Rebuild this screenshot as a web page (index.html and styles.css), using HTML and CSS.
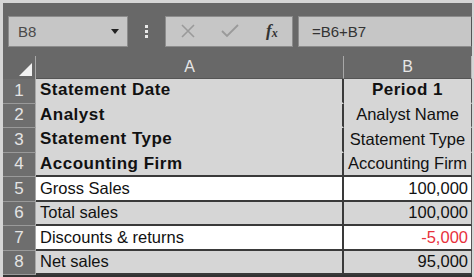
FILE: index.html
```html
<!DOCTYPE html>
<html lang="en">
<head>
    <meta charset="UTF-8">
    <meta name="viewport" content="width=device-width, initial-scale=1.0">
    <title>Sheet - B8</title>
    <link rel="stylesheet" href="styles.css">
</head>
<body>
    <div class="window">
        <div class="toolbar">
            <div class="name-box">
                <span>B8</span>
                <span class="caret"></span>
            </div>
            <div class="grip">
                <span></span><span></span><span></span>
            </div>
            <div class="tool-box">
                <svg class="tool-icon" width="14" height="14" viewBox="0 0 14 14">
                    <path d="M1 1 L13 13 M13 1 L1 13" stroke="#9a9a9a" stroke-width="1.6" fill="none"/>
                </svg>
                <svg class="tool-icon" width="18" height="14" viewBox="0 0 18 14">
                    <path d="M1 7 L6 12 L17 1" stroke="#9a9a9a" stroke-width="1.8" fill="none"/>
                </svg>
                <span class="fx">f<sub>x</sub></span>
            </div>
            <div class="formula-box">=B6+B7</div>
        </div>

        <div class="sheet">
            <div class="corner"><span class="select-all"></span></div>
            <div class="col-head">A</div>
            <div class="col-head last">B</div>

            <div class="row-num">1</div>
            <div class="cell bold plain">Statement Date</div>
            <div class="cell bold plain center colb">Period 1</div>

            <div class="row-num">2</div>
            <div class="cell bold plain">Analyst</div>
            <div class="cell plain center colb">Analyst Name</div>

            <div class="row-num">3</div>
            <div class="cell bold plain">Statement Type</div>
            <div class="cell plain center colb">Statement Type</div>

            <div class="row-num">4</div>
            <div class="cell bold">Accounting Firm</div>
            <div class="cell center colb">Accounting Firm</div>

            <div class="row-num">5</div>
            <div class="cell white">Gross Sales</div>
            <div class="cell white num colb">100,000</div>

            <div class="row-num">6</div>
            <div class="cell">Total sales</div>
            <div class="cell num colb">100,000</div>

            <div class="row-num">7</div>
            <div class="cell white">Discounts &amp; returns</div>
            <div class="cell white num negative colb">-5,000</div>

            <div class="row-num">8</div>
            <div class="cell">Net sales</div>
            <div class="cell num colb">95,000</div>
        </div>
    </div>
</body>
</html>
```

FILE: styles.css
```css
body {
    margin: 0;
    padding: 3px 2px 0 3px;
    background: #d6d6d6;
    font-family: "Liberation Sans", Arial, sans-serif;
    height: 277px;
    box-sizing: border-box;
    overflow: hidden;
}

.window {
    background: #686868;
}

.toolbar {
    display: flex;
    align-items: center;
    height: 53px;
    padding: 12px 0 9px 5px;
    box-sizing: border-box;
}

.name-box {
    width: 120px;
    height: 31px;
    box-sizing: border-box;
    background: #c6c6c6;
    border: 1px solid #8c8c8c;
    display: flex;
    align-items: center;
    justify-content: space-between;
    padding: 0 8px 0 9px;
    font-size: 15px;
    color: #4a4a4a;
}

.caret {
    width: 0;
    height: 0;
    border-left: 4px solid transparent;
    border-right: 4px solid transparent;
    border-top: 5px solid #222;
}

.grip {
    width: 37px;
    display: flex;
    flex-direction: column;
    align-items: center;
    gap: 2px;
}

.grip span {
    width: 3px;
    height: 3px;
    background: #e8e8e8;
}

.tool-box {
    width: 128px;
    height: 31px;
    box-sizing: border-box;
    background: #c6c6c6;
    border: 1px solid #8c8c8c;
    display: flex;
    align-items: center;
    padding-left: 15px;
}

.tool-icon {
    margin-right: 26px;
}

.fx {
    font-family: "Liberation Serif", "Times New Roman", serif;
    font-style: italic;
    font-weight: bold;
    font-size: 17px;
    color: #333;
    margin-left: 1px;
}

.fx sub {
    font-size: 12px;
    vertical-align: -1px;
}

.formula-box {
    flex: 1;
    height: 31px;
    box-sizing: border-box;
    margin-left: 5px;
    background: #c6c6c6;
    border: 1px solid #8c8c8c;
    border-right: 1px solid #555;
    padding-left: 13px;
    display: flex;
    align-items: center;
    font-size: 15px;
    color: #333;
}

.sheet {
    display: grid;
    grid-template-columns: 33px 308px 128px;
    grid-template-rows: 23px repeat(8, 24.5px);
    border-bottom: 2px solid #333;
}

.corner {
    border-right: 1px solid #a8a8a8;
    position: relative;
}

.select-all {
    position: absolute;
    right: 3px;
    bottom: 3px;
    width: 0;
    height: 0;
    border-left: 13px solid transparent;
    border-bottom: 13px solid #f2f2f2;
}

.col-head {
    display: flex;
    align-items: center;
    justify-content: center;
    color: #e6e6e6;
    font-size: 16px;
    border-right: 1px solid #a8a8a8;
    border-bottom: 1px solid #555;
}

.col-head.last {
    border-right: 1px solid #bbb;
}

.row-num {
    display: flex;
    align-items: center;
    justify-content: center;
    background: #6e6e6e;
    color: #e4e4e4;
    font-size: 17px;
    border-right: 1px solid #a8a8a8;
    border-bottom: 1px solid #9a9a9a;
    box-sizing: border-box;
}

.cell {
    display: flex;
    align-items: center;
    background: #d6d6d6;
    color: #111;
    font-size: 16.5px;
    padding: 0 3px 0 4px;
    border-right: 2px solid #3a3a3a;
    border-bottom: 2px solid #3a3a3a;
    box-sizing: border-box;
    white-space: nowrap;
    overflow: hidden;
}

.cell.plain {
    border-bottom-color: #d6d6d6;
}

.cell.colb {
    border-right-width: 1px;
    border-right-color: #555;
}

.cell.white {
    background: #ffffff;
}

.bold {
    font-weight: bold;
    font-size: 17px;
    letter-spacing: 0.5px;
}

.center {
    justify-content: center;
    padding: 0;
}

.num {
    justify-content: flex-end;
}

.negative {
    color: #e8313c;
}
```
